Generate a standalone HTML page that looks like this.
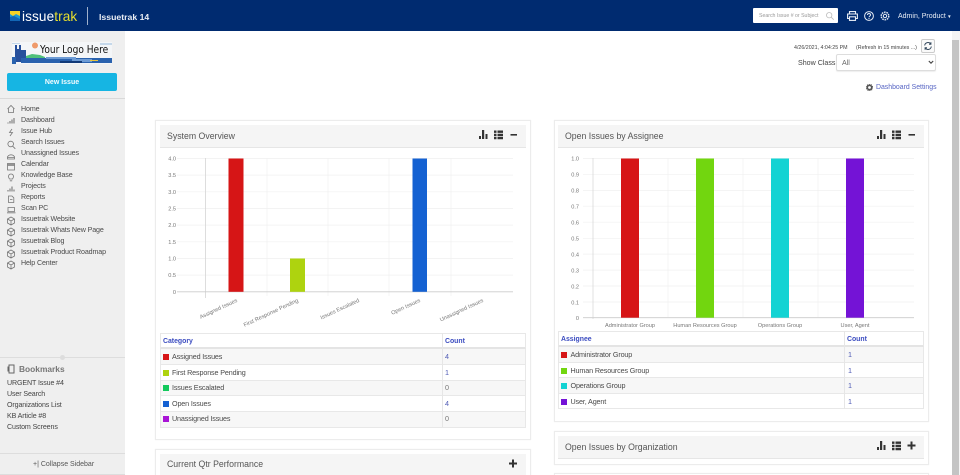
<!DOCTYPE html>
<html><head><meta charset="utf-8"><style>
*{box-sizing:border-box}
html,body{margin:0;padding:0;width:960px;height:475px;overflow:hidden;background:#fff;font-family:"Liberation Sans",sans-serif;color:#444}
#w{position:relative;width:960px;height:475px;overflow:hidden}
.a{position:absolute;white-space:nowrap}
.nav{position:absolute;left:21px;font-size:7.1px;letter-spacing:-.12px;color:#4a4a4a;line-height:11px;white-space:nowrap}
.bm{position:absolute;left:7px;font-size:7.1px;letter-spacing:-.12px;color:#444;line-height:11px;white-space:nowrap}
.panel{position:absolute;background:#fff;border:1px solid #ececec;box-shadow:0 0 1px #eee}
.hd{position:absolute;background:#f5f5f5;border-bottom:1px solid #e6e6e6}
.tt{position:absolute;font-size:9.6px;color:#555;white-space:nowrap;line-height:12px;transform:scaleX(.91);transform-origin:0 0}
.row{position:absolute;border:1px solid #e8e8e8;border-top:0}
.sw{position:absolute;width:6px;height:6px}
.td{position:absolute;font-size:7.2px;letter-spacing:-.14px;color:#4a4a4a;line-height:10px;white-space:nowrap}
.th{position:absolute;font-size:6.9px;font-weight:bold;color:#3b4cc0;line-height:10px}
.ct{color:#4f5bb5}
</style></head><body><div id="w">
<!-- top bar -->
<div class="a" style="left:0;top:0;width:960px;height:31px;background:#002b70"></div>
<svg class="a" style="left:10px;top:11px" width="10" height="10"><rect width="10" height="10" fill="#1c9ad6"/><path d="M0 0h10v5L6 3 3 5 0 3z" fill="#f5d327"/><path d="M0 6l4-1 6 3v2H0z" fill="#1266b5"/></svg>
<div class="a" style="left:22px;top:8px;font-size:13.6px;line-height:17px;color:#fff;letter-spacing:.1px">issue<span style="color:#e7df2c">trak</span></div>
<div class="a" style="left:87px;top:7px;width:1px;height:18px;background:#9fb0cc"></div>
<div class="a" style="left:99px;top:10.500px;font-size:8.700px;font-weight:bold;color:#e8edf5;line-height:12px">Issuetrak 14</div>
<div class="a" style="left:753px;top:8px;width:85px;height:15px;background:#fff;border-radius:1px"></div>
<div class="a" style="left:759px;top:12px;font-size:5.200px;color:#999;line-height:9px">Search Issue # or Subject</div>
<svg class="a" style="left:826px;top:12px" width="8" height="8" fill="none" stroke="#bbb" stroke-width=".8"><circle cx="3.200" cy="3.200" r="2.700"/><path d="M5.200 5.200l2.500 2.500"/></svg>
<svg class="a" style="left:847px;top:11px" width="11" height="10" fill="none" stroke="#e8edf5" stroke-width="1.100"><path d="M2.500 3V.6h6V3M2.500 7.500H.6V3h9.800v4.500H8.500"/><rect x="2.500" y="5.800" width="6" height="3.600"/></svg>
<svg class="a" style="left:864px;top:11px" width="10" height="10" fill="none" stroke="#e8edf5" stroke-width="1"><circle cx="5" cy="5" r="4.400"/><path d="M3.500 4c0-2 3-2 3 0 0 1-1.500 1-1.500 2.300M5 7v1"/></svg>
<svg class="a" style="left:880px;top:11px" width="10" height="10" fill="none" stroke="#e8edf5"><circle cx="5" cy="5" r="1.700"/><circle cx="5" cy="5" r="3.800" stroke-width="1.400" stroke-dasharray="1.600 .8"/></svg>
<div class="a" style="left:898px;top:12px;font-size:7px;color:#e8edf5;line-height:10px">Admin, Product<span style="font-size:4.500px"> ▼</span></div>
<!-- sidebar -->
<div class="a" style="left:0;top:31px;width:125px;height:444px;background:#efefef"></div>
<svg class="a" style="left:12px;top:42px" width="100" height="22"><rect width="100" height="22" fill="#f4f6f8"/><circle cx="23" cy="3.500" r="3" fill="#ef9a6a"/><path d="M0 1h8v1H0zM88 1h12v2H88z" fill="#c5d8ea"/><path d="M3 20V3h2v4h2V3h2v5h5v12z" fill="#27509c"/><path d="M14 14l6-2 8 1 5 2v4H14z" fill="#4fc07a"/><path d="M0 15h4v7H0zM9 16h91v5H9z" fill="#2a62ae"/><path d="M34 15h30v2H34zM60 17h20v3H60z" fill="#6d9bd4"/><path d="M48 19h22v2H48z" fill="#123a78"/><path d="M78 18h8v1h-8z" fill="#e8c640"/></svg>
<div class="a" style="left:40px;top:43px;font-family:'DejaVu Sans',sans-serif;font-size:10.400px;line-height:14px;color:#111;transform:scaleX(.87);transform-origin:0 0">Your Logo Here</div>
<div class="a" style="left:7px;top:73px;width:110px;height:18px;background:#16b5e3;border-radius:2px;color:#f2fbff;font-size:7px;font-weight:bold;text-align:center;line-height:19px">New Issue</div>
<div class="a" style="left:0;top:98px;width:125px;height:1px;background:#d9d9d9"></div>

<div class="nav" style="top:104px">Home</div>
<div class="nav" style="top:115px">Dashboard</div>
<div class="nav" style="top:126px">Issue Hub</div>
<div class="nav" style="top:137px">Search Issues</div>
<div class="nav" style="top:148px">Unassigned Issues</div>
<div class="nav" style="top:159px">Calendar</div>
<div class="nav" style="top:170px">Knowledge Base</div>
<div class="nav" style="top:181px">Projects</div>
<div class="nav" style="top:192px">Reports</div>
<div class="nav" style="top:203px">Scan PC</div>
<div class="nav" style="top:214px">Issuetrak Website</div>
<div class="nav" style="top:225px">Issuetrak Whats New Page</div>
<div class="nav" style="top:236px">Issuetrak Blog</div>
<div class="nav" style="top:247px">Issuetrak Product Roadmap</div>
<div class="nav" style="top:258px">Help Center</div>
<svg class="a" style="left:6px;top:104px" width="10" height="170" fill="none" stroke="#777" stroke-width=".8">
<path d="M1.500 5l3.500-3.500L8.500 5M2.500 4.500V8.500h5V4.500"/>
<path d="M2 19.500v-1M4 19.500v-2.500M6 19.500v-4M8 19.500v-5.500" stroke-width="1.100"/>
<path d="M6 25l-2.500 3.500h3L4 32"/>
<path d="M7.500 40a2.800 2.800 0 1 1-5.600 0 2.800 2.800 0 0 1 5.600 0zM6.800 42.300L9.300 44.800"/>
<path d="M1.500 53.500a3.500 2.700 0 0 1 7 0M1.500 53.500h7v1.500h-7z"/>
<rect x="1.500" y="59.500" width="7" height="6.500"/><path d="M1.500 61h7" stroke-width="1.500"/>
<path d="M3.500 75C1.500 72 3 70 5 70s3.500 2 1.500 5zM3.800 76.800h2.400"/>
<path d="M2 87.500v-1.500M4 87.500v-3M6 87.500v-5M8 87.500v-2" stroke-width="1.100"/>
<path d="M2.500 92h3.500l1.800 1.800V98.500H2.500zM4 95.500h2.500"/>
<path d="M2 103.500h6.500v4H2zM1 108.800h8.500"/>
<path d="M1.500 115l3.500-2 3.500 2v4l-3.500 2-3.500-2zM1.500 115l3.500 2 3.500-2M5 117v4"/>
<path d="M1.500 126l3.500-2 3.500 2v4l-3.500 2-3.500-2zM1.500 126l3.500 2 3.500-2M5 128v4"/>
<path d="M1.500 137l3.500-2 3.500 2v4l-3.500 2-3.500-2zM1.500 137l3.500 2 3.500-2M5 139v4"/>
<path d="M1.500 148l3.500-2 3.500 2v4l-3.500 2-3.500-2zM1.500 148l3.500 2 3.500-2M5 150v4"/>
<path d="M1.500 159l3.500-2 3.500 2v4l-3.500 2-3.500-2zM1.500 159l3.500 2 3.500-2M5 161v4"/>
</svg>
<div class="a" style="left:0;top:357px;width:125px;height:1px;background:#ddd"></div>
<div class="a" style="left:60px;top:355px;width:5px;height:5px;background:#ddd;border-radius:50%"></div>
<svg class="a" style="left:7px;top:364px" width="9" height="10" fill="none" stroke="#666"><path d="M2 1h5v8H2zM1 2.500v5"/></svg>
<div class="a" style="left:19px;top:363px;font-size:8.400px;font-weight:bold;color:#777;line-height:12px">Bookmarks</div>
<div class="bm" style="top:378px">URGENT Issue #4</div>
<div class="bm" style="top:389px">User Search</div>
<div class="bm" style="top:400px">Organizations List</div>
<div class="bm" style="top:411px">KB Article #8</div>
<div class="bm" style="top:422px">Custom Screens</div>
<div class="a" style="left:0;top:453px;width:125px;height:1px;background:#ddd"></div>
<div class="a" style="left:0;top:474px;width:125px;height:1px;background:#ddd"></div>
<div class="a" style="left:33px;top:460px;font-size:7px;color:#555;line-height:10px">+| Collapse Sidebar</div>

<!-- top right -->
<div class="a" style="left:794px;top:44px;font-size:5.300px;color:#444;line-height:9px">4/26/2021, 4:04:25 PM</div>
<div class="a" style="left:856px;top:44px;font-size:5.300px;color:#444;line-height:9px">(Refresh in 15 minutes ...)</div>
<div class="a" style="left:921px;top:39px;width:14px;height:14px;border:1px solid #ccc;border-radius:2px;background:#fafafa"></div>
<svg class="a" style="left:924px;top:42px" width="8" height="8" fill="none" stroke="#34495e"><path d="M.7 3.500A3.300 3.300 0 0 1 6.700 2M7.300 4.500A3.300 3.300 0 0 1 1.300 6M6.900.3v2H5M1.100 7.700v-2H3"/></svg>
<div class="a" style="left:798px;top:58px;font-size:7.100px;color:#444;line-height:10px">Show Class:</div>
<div class="a" style="left:836px;top:54px;width:100px;height:17px;border:1px solid #ddd;border-radius:2px;background:#fff;box-shadow:0 1px 1px #eee"></div>
<div class="a" style="left:842px;top:58px;font-size:7.100px;color:#666;line-height:10px">All</div>
<svg class="a" style="left:928px;top:60px" width="6" height="5" fill="none" stroke="#444" stroke-width="1.100"><path d="M.8 1l2.200 2.200L5.200 1"/></svg>
<svg class="a" style="left:866px;top:84px" width="7" height="7"><circle cx="3.500" cy="3.500" r="2.200" fill="none" stroke="#555" stroke-width="1.600"/><circle cx="3.500" cy="3.500" r="3.200" fill="none" stroke="#555" stroke-dasharray="1 1"/></svg>
<div class="a" style="left:876px;top:83px;font-size:6.900px;color:#5765c4;line-height:10px">Dashboard Settings</div>
<!-- scrollbar -->
<div class="a" style="left:952px;top:31px;width:8px;height:444px;background:#f4f4f4"></div>
<div class="a" style="left:952px;top:40px;width:7px;height:435px;background:#c4c4c4"></div>

<!-- panel 1 -->
<div class="panel" style="left:155px;top:120px;width:376px;height:320px"></div>
<div class="hd" style="left:160px;top:125px;width:366px;height:23px"></div>
<div class="tt" style="left:167px;top:131px">System Overview</div>
<svg class="a" style="left:479px;top:130px" width="38" height="10" fill="#333"><path d="M0 6h2v3H0zM3 0h2.200v9H3zM6.500 4h2v5h-2z"/><path d="M15 .5h2.500v2.400H15zM18.500 .5H24v2.400h-5.500zM15 3.700h2.500v2.400H15zM18.500 3.700H24v2.400h-5.500zM15 6.900h2.500v2.400H15zM18.500 6.900H24v2.400h-5.500z"/><path d="M31.500 4h6.500v1.600h-6.500z"/></svg>
<svg class="a" style="left:160px;top:150px" width="366" height="180" font-family="Liberation Sans" font-size="5.600" fill="#777">
<g stroke="#f0f0f0" stroke-width=".7"><path d="M17 8.500h336M17 25.100h336M17 41.800h336M17 58.500h336M17 75.100h336M17 91.800h336M17 108.500h336M17 125.100h336"/><path d="M107 8v138M168 8v138M229 8v138M291 8v138"/></g>
<path d="M45.500 8v140" stroke="#d5d5d5" stroke-width=".8"/>
<path d="M17 141.800h336" stroke="#ccc" stroke-width=".8"/>
<rect x="68.500" y="8.500" width="15" height="133.300" fill="#d61516"/>
<rect x="130" y="108.500" width="15" height="33.300" fill="#aed30f"/>
<rect x="252.500" y="8.500" width="14.500" height="133.300" fill="#1461d2"/>
<g text-anchor="end"><text x="16" y="10.500">4.0</text><text x="16" y="27">3.5</text><text x="16" y="44">3.0</text><text x="16" y="60.500">2.5</text><text x="16" y="77">2.0</text><text x="16" y="94">1.5</text><text x="16" y="110.500">1.0</text><text x="16" y="127">0.5</text><text x="16" y="144">0</text>
<g font-size="5.600"><text transform="translate(76 148) rotate(-25)" x="0" y="4">Assigned Issues</text><text transform="translate(137 148) rotate(-25)" x="0" y="4">First Response Pending</text><text transform="translate(198 148) rotate(-25)" x="0" y="4">Issues Escalated</text><text transform="translate(259 148) rotate(-25)" x="0" y="4">Open Issues</text><text transform="translate(322 148) rotate(-25)" x="0" y="4">Unassigned Issues</text></g></g>
</svg>
<div class="a" style="left:160px;top:333px;width:366px;height:16px;background:#fff;border:1px solid #e8e8e8;border-bottom:2px solid #e4e4e4"></div>
<div class="row" style="left:160px;top:349px;width:366px;height:16px;background:#f7f7f7"></div>
<div class="row" style="left:160px;top:365px;width:366px;height:15.500px;background:#fff"></div>
<div class="row" style="left:160px;top:380.500px;width:366px;height:15.500px;background:#f7f7f7"></div>
<div class="row" style="left:160px;top:396px;width:366px;height:15.500px;background:#fff"></div>
<div class="row" style="left:160px;top:411.500px;width:366px;height:16px;background:#f7f7f7"></div>
<div class="a" style="left:442px;top:333px;width:1px;height:94px;background:#e6e6e6"></div>
<div class="th" style="left:163px;top:337px">Category</div><div class="th" style="left:445px;top:337px">Count</div>
<div class="sw" style="left:163px;top:354px;background:#d61516"></div><div class="td" style="left:172px;top:352px">Assigned Issues</div><div class="td ct" style="left:445px;top:352px">4</div>
<div class="sw" style="left:163px;top:370px;background:#aed30f"></div><div class="td" style="left:172px;top:368px">First Response Pending</div><div class="td ct" style="left:445px;top:368px">1</div>
<div class="sw" style="left:163px;top:385px;background:#13c95c"></div><div class="td" style="left:172px;top:383px">Issues Escalated</div><div class="td" style="left:445px;top:383px;color:#777">0</div>
<div class="sw" style="left:163px;top:401px;background:#1461d2"></div><div class="td" style="left:172px;top:399px">Open Issues</div><div class="td ct" style="left:445px;top:399px">4</div>
<div class="sw" style="left:163px;top:416px;background:#a915d6"></div><div class="td" style="left:172px;top:414px">Unassigned Issues</div><div class="td" style="left:445px;top:414px;color:#777">0</div>

<!-- panel current qtr -->
<div class="panel" style="left:155px;top:449px;width:376px;height:26px;border-bottom:0"></div>
<div class="hd" style="left:160px;top:454px;width:366px;height:21px;border-bottom:0"></div>
<div class="tt" style="left:167px;top:459px">Current Qtr Performance</div>
<svg class="a" style="left:509px;top:459px" width="8" height="9" fill="#333"><path d="M3 .5h2v3h3v2H5v3H3v-3H0v-2h3z"/></svg>

<!-- panel 2 -->
<div class="panel" style="left:554px;top:120px;width:375px;height:302px"></div>
<div class="hd" style="left:558px;top:125px;width:366px;height:23px"></div>
<div class="tt" style="left:565px;top:131px">Open Issues by Assignee</div>
<svg class="a" style="left:877px;top:130px" width="38" height="10" fill="#333"><path d="M0 6h2v3H0zM3 0h2.200v9H3zM6.500 4h2v5h-2z"/><path d="M15 .5h2.500v2.400H15zM18.500 .5H24v2.400h-5.500zM15 3.700h2.500v2.400H15zM18.500 3.700H24v2.400h-5.500zM15 6.900h2.500v2.400H15zM18.500 6.900H24v2.400h-5.500z"/><path d="M31.500 4h6.500v1.600h-6.500z"/></svg>
<svg class="a" style="left:555px;top:150px" width="372" height="180" font-family="Liberation Sans" font-size="5.600" fill="#777">
<g stroke="#f0f0f0" stroke-width=".7"><path d="M28 8.500h331M28 24.300h331M28 40.400h331M28 56.200h331M28 72.200h331M28 88.300h331M28 104.100h331M28 120.100h331M28 136h331M28 152h331"/><path d="M113 8v159M188 8v159M263 8v159"/></g>
<path d="M38 8v161" stroke="#d9d9d9" stroke-width=".8"/>
<path d="M28 167.700h331" stroke="#ccc" stroke-width=".8"/>
<rect x="66" y="8.500" width="18" height="159.200" fill="#d61516"/>
<rect x="141" y="8.500" width="18" height="159.200" fill="#72d60f"/>
<rect x="216" y="8.500" width="18" height="159.200" fill="#13d3d3"/>
<rect x="291" y="8.500" width="18" height="159.200" fill="#7413d6"/>
<g text-anchor="end"><text x="24" y="10.500">1.0</text><text x="24" y="26.500">0.9</text><text x="24" y="42.500">0.8</text><text x="24" y="58.500">0.7</text><text x="24" y="74.500">0.6</text><text x="24" y="90.500">0.5</text><text x="24" y="106.500">0.4</text><text x="24" y="122.500">0.3</text><text x="24" y="138.500">0.2</text><text x="24" y="154.500">0.1</text><text x="24" y="170">0</text></g>
<g text-anchor="middle" font-size="5.600"><text x="75" y="177">Administrator Group</text><text x="150" y="177">Human Resources Group</text><text x="225" y="177">Operations Group</text><text x="300" y="177">User, Agent</text></g>
</svg>
<div class="a" style="left:558px;top:331px;width:366px;height:16px;background:#fff;border:1px solid #e8e8e8;border-bottom:2px solid #e4e4e4"></div>
<div class="row" style="left:558px;top:347px;width:366px;height:15.500px;background:#f7f7f7"></div>
<div class="row" style="left:558px;top:362.500px;width:366px;height:15.500px;background:#fff"></div>
<div class="row" style="left:558px;top:378px;width:366px;height:15.500px;background:#f7f7f7"></div>
<div class="row" style="left:558px;top:393.500px;width:366px;height:15.500px;background:#fff"></div>
<div class="a" style="left:844px;top:331px;width:1px;height:78px;background:#e6e6e6"></div>
<div class="th" style="left:561px;top:335px">Assignee</div><div class="th" style="left:847px;top:335px">Count</div>
<div class="sw" style="left:561px;top:352px;background:#d61516"></div><div class="td" style="left:570.500px;top:350px">Administrator Group</div><div class="td ct" style="left:848px;top:350px">1</div>
<div class="sw" style="left:561px;top:368px;background:#72d60f"></div><div class="td" style="left:570.500px;top:366px">Human Resources Group</div><div class="td ct" style="left:848px;top:366px">1</div>
<div class="sw" style="left:561px;top:383px;background:#13d3d3"></div><div class="td" style="left:570.500px;top:381px">Operations Group</div><div class="td ct" style="left:848px;top:381px">1</div>
<div class="sw" style="left:561px;top:399px;background:#7413d6"></div><div class="td" style="left:570.500px;top:397px">User, Agent</div><div class="td ct" style="left:848px;top:397px">1</div>

<!-- panel 3 -->
<div class="panel" style="left:554px;top:431px;width:375px;height:34px"></div>
<div class="hd" style="left:558px;top:436px;width:366px;height:23px"></div>
<div class="tt" style="left:565px;top:442px">Open Issues by Organization</div>
<svg class="a" style="left:877px;top:441px" width="40" height="10" fill="#333"><path d="M0 6h2v3H0zM3 0h2.200v9H3zM6.500 4h2v5h-2z"/><path d="M15 .5h2.500v2.400H15zM18.500 .5H24v2.400h-5.500zM15 3.700h2.500v2.400H15zM18.500 3.700H24v2.400h-5.500zM15 6.900h2.500v2.400H15zM18.500 6.900H24v2.400h-5.500z"/><path d="M33.500 .5h2v3h3v2h-3v3h-2v-3h-3v-2h3z"/></svg>
<div class="panel" style="left:554px;top:473px;width:375px;height:2px;border-bottom:0"></div>
</div></body></html>
